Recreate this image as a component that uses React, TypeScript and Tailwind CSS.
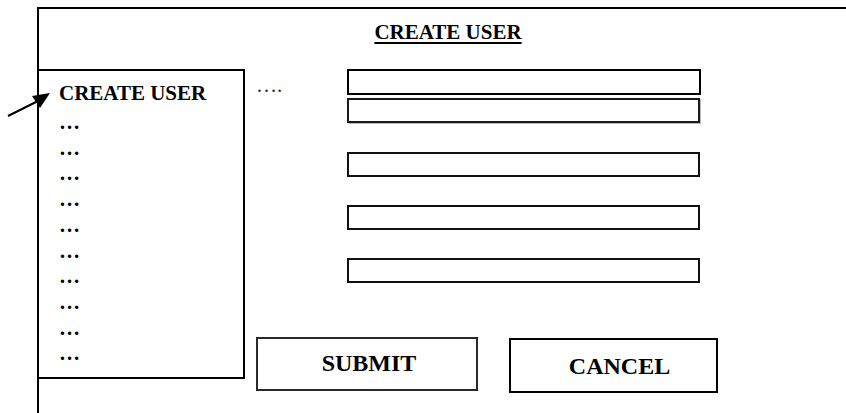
import React from 'react';

const sideItems = Array.from({ length: 10 }, (_, i) => i);

export default function App() {
  return (
    <div className="relative w-[846px] h-[413px] overflow-hidden bg-white text-black font-['Liberation_Serif',serif] flex flex-col pt-[7px] pl-[37px]">
      {/* outer frame (right edge runs off the page) */}
      <div className="flex-1 flex flex-col border-t-2 border-l-2 border-black">
        <div className="pl-[11px] mt-[11px] text-center">
          <h1 className="text-[21px] leading-[24px] font-bold underline decoration-[1.5px] underline-offset-[3px]">
            CREATE USER
          </h1>
        </div>

        <div className="mt-[25px] -ml-[2px] flex items-start">
          {/* Side menu */}
          <div className="w-[208px] h-[310px] border-2 border-black pt-[9px] pl-[20px] text-[21px] font-bold">
            <p className="leading-[27px] mb-[3px]">CREATE USER</p>
            {sideItems.map((i) => (
              <p key={i} className="leading-[25.7px]">
                …
              </p>
            ))}
          </div>

          {/* Form */}
          <div className="flex flex-col">
            <div className="flex items-start">
              <span className="ml-[11px] mt-[4px] w-[91px] text-[21px] leading-[24px] text-[#333]">….</span>
              <div className="flex flex-col">
                <div className="w-[354px] h-[26px] border-2 border-black" />
                <div className="mt-[3px] w-[353px] h-[25px] border-2 border-[#1a1a1a] shadow-[1px_1px_0_#bbb]" />
                <div className="mt-[29px] w-[353px] h-[25px] border-2 border-[#111]" />
                <div className="mt-[28px] w-[353px] h-[25px] border-2 border-[#111]" />
                <div className="mt-[28px] w-[353px] h-[25px] border-2 border-[#111]" />
              </div>
            </div>

            <div className="mt-[54px] ml-[11px] flex items-start gap-[31px]">
              <button className="w-[222px] h-[54px] border-2 border-[#2a2a2a] flex items-center justify-center pl-[4px] pb-[2px] text-[24px] font-bold">
                SUBMIT
              </button>
              <button className="mt-[1px] w-[209px] h-[55px] border-2 border-black flex items-center justify-center pl-[12px] text-[24px] font-bold">
                CANCEL
              </button>
            </div>
          </div>
        </div>
      </div>

      {/* pointer arrow */}
      <svg className="absolute left-0 top-0" width="60" height="120" viewBox="0 0 60 120">
        <line x1="8" y1="116" x2="38" y2="101" stroke="#000" strokeWidth="2" />
        <polygon points="50,93 32,96 40,108" fill="#000" />
      </svg>
    </div>
  );
}
